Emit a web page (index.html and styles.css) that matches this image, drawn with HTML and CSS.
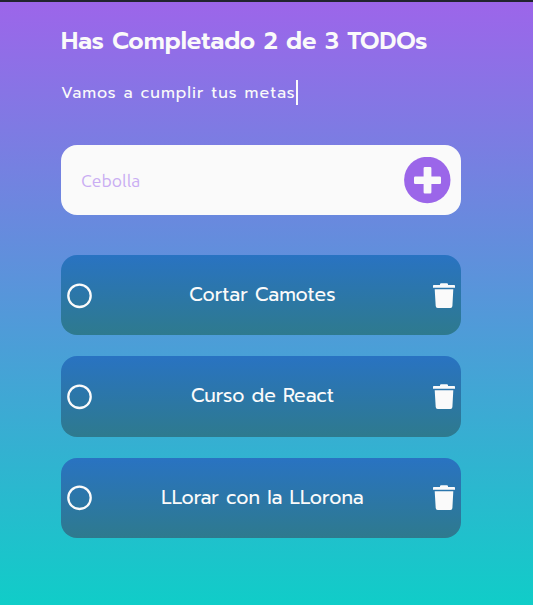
FILE: index.html
```html
<!DOCTYPE html>
<html lang="es">
<head>
<meta charset="UTF-8">
<title>TODOs</title>
<link rel="stylesheet" href="styles.css">
</head>
<body>
<main class="app">
  <h1 class="title">Has Completado 2 de 3 TODOs</h1>
  <p class="subtitle"><span class="typing">Vamos a cumplir tus metas</span></p>
  <form class="search">
    <input class="search-input" type="text" placeholder="Cebolla">
    <button class="add" type="button" aria-label="Agregar">
      <svg width="47" height="47" viewBox="0 0 47 47"><circle cx="23.3" cy="23" r="23.2" fill="#9b66e9"/><path d="M20.9 10h5.2a1.3 1.3 0 0 1 1.3 1.3v8.2h8.3a1.3 1.3 0 0 1 1.3 1.3v5a1.3 1.3 0 0 1-1.3 1.3h-8.3v8.2a1.3 1.3 0 0 1-1.3 1.3h-5.2a1.3 1.3 0 0 1-1.3-1.3v-8.2h-8.3a1.3 1.3 0 0 1-1.3-1.3v-5a1.3 1.3 0 0 1 1.3-1.3h8.3v-8.2a1.3 1.3 0 0 1 1.3-1.3z" fill="#fafafa"/></svg>
    </button>
  </form>
  <ul class="list">
    <li class="item">
      <svg class="check" width="26" height="26" viewBox="0 0 26 26"><circle cx="13.5" cy="12.8" r="11.2"/></svg>
      <span class="text">Cortar Camotes</span>
      <svg class="trash" width="22" height="26" viewBox="0 0 22 26"><path d="M7 2V1.3Q7 .3 8.2 .3h5.6Q15 .3 15 1.3V2h6.2q.8 0 .8.8V4.7H0V2.8Q0 2 .8 2zM1.7 6.2h18.6l-.9 16.8q-.1 2-2 2H4.7q-1.9 0-2-2z"/></svg>
    </li>
    <li class="item">
      <svg class="check" width="26" height="26" viewBox="0 0 26 26"><circle cx="13.5" cy="12.8" r="11.2"/></svg>
      <span class="text">Curso de React</span>
      <svg class="trash" width="22" height="26" viewBox="0 0 22 26"><path d="M7 2V1.3Q7 .3 8.2 .3h5.6Q15 .3 15 1.3V2h6.2q.8 0 .8.8V4.7H0V2.8Q0 2 .8 2zM1.7 6.2h18.6l-.9 16.8q-.1 2-2 2H4.7q-1.9 0-2-2z"/></svg>
    </li>
    <li class="item">
      <svg class="check" width="26" height="26" viewBox="0 0 26 26"><circle cx="13.5" cy="12.8" r="11.2"/></svg>
      <span class="text">LLorar con la LLorona</span>
      <svg class="trash" width="22" height="26" viewBox="0 0 22 26"><path d="M7 2V1.3Q7 .3 8.2 .3h5.6Q15 .3 15 1.3V2h6.2q.8 0 .8.8V4.7H0V2.8Q0 2 .8 2zM1.7 6.2h18.6l-.9 16.8q-.1 2-2 2H4.7q-1.9 0-2-2z"/></svg>
    </li>
  </ul>
</main>
</body>
</html>
```
FILE: styles.css
```css
* { box-sizing: border-box; margin: 0; padding: 0; }
body {
  height: 605px;
  overflow: hidden;
  border-top: 2px solid #22242f;
  background: linear-gradient(#9d65ea 0, #4e9cd8 55%, #10cdc8 100%) no-repeat;
  color: #fafafa;
  font-family: Prompt, Lato, "Noto Sans", sans-serif;
}
.app { width: 400px; margin-left: 61px; padding-top: 21px; }
.title { height: 36px; line-height: 36px; font-size: 24px; font-weight: 600; white-space: nowrap; }
.subtitle { display: flex; margin-top: 21px; font-size: 16px; line-height: 26px; white-space: nowrap; }
.typing { width: 237px; height: 25px; border-right: 2px solid #fafafa; letter-spacing: 1px; }
.search { display: flex; align-items: center; height: 70px; margin-top: 40px; padding: 0 10px 0 20px; border-radius: 16px; background: #fafafa; }
.search-input { flex: 1; min-width: 0; height: 50px; padding-top: 1px; border: 0; outline: 0; background: transparent; font: 17.6px Ubuntu, Oxygen, "Noto Sans", sans-serif; }
.search-input::placeholder { color: #c9adf3; opacity: 1; }
.add { width: 47px; height: 47px; border: 0; background: none; }
.add svg { display: block; }
.list { display: grid; gap: 20.93px; margin-top: 40px; list-style: none; }
.item { display: flex; align-items: center; height: 80.4px; padding: 0 6px 0 5px; border-radius: 16px; background: linear-gradient(#2973c2, #2e7a8e); }
.check { margin-top: 1px; fill: none; stroke: #fafafa; stroke-width: 2.3; }
.trash { margin-top: 1px; fill: #fafafa; }
.text { flex: 1; margin-top: -1.5px; text-align: center; font-size: 19.2px; line-height: 29px; white-space: nowrap; }
```
